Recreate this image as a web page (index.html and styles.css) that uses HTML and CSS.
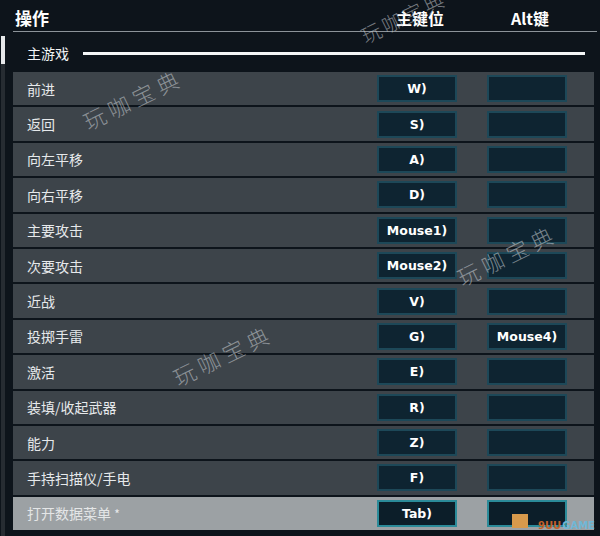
FILE: index.html
```html
<!DOCTYPE html>
<html>

<head>
	<meta charset="utf-8">
	<title>操作</title>
	<link rel="stylesheet" href="styles.css">
</head>

<body>
	<div class="screen">
		<div class="head">
			<span class="head-title">操作</span>
			<span class="head-col">主键位</span>
			<span class="head-col">Alt键</span>
		</div>
		<div class="body">
			<div class="scroll"><div class="scroll-thumb"></div></div>
			<div class="list">
				<div class="section">
					<span>主游戏</span>
					<div class="section-line"></div>
				</div>
				<div class="row"><span class="name">前进</span><span class="key">W)</span><span class="key"></span></div>
				<div class="row"><span class="name">返回</span><span class="key">S)</span><span class="key"></span></div>
				<div class="row"><span class="name">向左平移</span><span class="key">A)</span><span class="key"></span></div>
				<div class="row"><span class="name">向右平移</span><span class="key">D)</span><span class="key"></span></div>
				<div class="row"><span class="name">主要攻击</span><span class="key">Mouse1)</span><span class="key"></span></div>
				<div class="row"><span class="name">次要攻击</span><span class="key">Mouse2)</span><span class="key"></span></div>
				<div class="row"><span class="name">近战</span><span class="key">V)</span><span class="key"></span></div>
				<div class="row"><span class="name">投掷手雷</span><span class="key">G)</span><span class="key">Mouse4)</span></div>
				<div class="row"><span class="name">激活</span><span class="key">E)</span><span class="key"></span></div>
				<div class="row"><span class="name">装填/收起武器</span><span class="key">R)</span><span class="key"></span></div>
				<div class="row"><span class="name">能力</span><span class="key">Z)</span><span class="key"></span></div>
				<div class="row"><span class="name">手持扫描仪/手电</span><span class="key">F)</span><span class="key"></span></div>
				<div class="row row-active"><span class="name">打开数据菜单 <i class="star">*</i></span><span class="key">Tab)</span><span class="key"></span></div>
			</div>
		</div>

		<span class="mark mark-1">玩咖宝典</span>
		<span class="mark mark-2">玩咖宝典</span>
		<span class="mark mark-3">玩咖宝典</span>
		<span class="mark mark-4">玩咖宝典</span>
		<span class="logo"><b class="logo-box"></b>9UU<em>GAME</em></span>
	</div>
</body>

</html>
```

FILE: styles.css
```css
html,
body {
	margin: 0;
	padding: 0;
	background-color: #0d141b;
}

.screen {
	position: relative;
	width: 600px;
	height: 536px;
	overflow: hidden;
	font-family: "Noto Sans CJK SC", "Noto Sans", sans-serif;
	color: #e9ecee;
}

.head {
	display: grid;
	grid-template-columns: 1fr 80px 80px;
	column-gap: 30px;
	align-items: end;
	margin-left: 13px;
	width: 555px;
	padding: 5px 27px 2px 2px;
	border-bottom: 1px solid #8c9399;
	height: 24px;
}

.head-title {
	font-size: 17px;
	font-weight: bold;
	line-height: 22px;
	color: #ffffff;
}

.head-col {
	font-size: 16px;
	font-weight: bold;
	line-height: 22px;
	text-align: center;
	color: #ffffff;
}

.body {
	display: flex;
	padding-top: 4px;
}

.scroll {
	width: 4px;
	margin: 0 8px 0 1px;
	background-color: #262c32;
	height: 500px;
}

.scroll-thumb {
	height: 28px;
	background-color: #e6e8ea;
}

.list {
	width: 581px;
	display: flex;
	flex-direction: column;
	gap: 2px;
}

.section {
	display: flex;
	align-items: center;
	height: 34px;
	padding-left: 14px;
	font-size: 14px;
	color: #f2f4f5;
}

.section-line {
	flex: 1;
	height: 3px;
	margin: 0 9px 0 14px;
	background-color: #f4f6f7;
}

.row {
	display: grid;
	grid-template-columns: 1fr 80px 80px;
	column-gap: 30px;
	align-items: center;
	height: 33.4px;
	padding: 0 27px 0 14px;
	background-color: #3d444a;
	font-size: 14px;
}

.name {
	color: #e6e9eb;
}

.key {
	height: 23px;
	line-height: 23px;
	border: 2px solid #1d4858;
	background-color: #0e2431;
	text-align: center;
	font-family: "DejaVu Sans", sans-serif;
	font-weight: bold;
	font-size: 12.5px;
	color: #ffffff;
}

.row-active {
	background-color: #9ca1a4;
}

.row-active .name {
	color: #e4e6e7;
}

.row-active .key {
	border-color: #2b8b99;
	background-color: #0c1e29;
}

.star {
	font-style: normal;
	font-size: 12px;
	color: #e8eaeb;
}

.mark {
	position: absolute;
	font-size: 22px;
	letter-spacing: 5px;
	color: rgba(205, 210, 215, 0.55);
	font-family: "Noto Sans CJK SC", sans-serif;
	font-weight: 300;
	transform: rotate(-26deg);
	transform-origin: left center;
	white-space: nowrap;
}

.mark-1 {
	left: 362px;
	top: 22px;
	font-size: 20px;
	letter-spacing: 3px;
}

.mark-2 {
	left: 84px;
	top: 106px;
}

.mark-3 {
	left: 458px;
	top: 262px;
}

.mark-4 {
	left: 174px;
	top: 362px;
}

.logo {
	position: absolute;
	left: 538px;
	top: 520px;
	font-family: "DejaVu Sans", sans-serif;
	font-size: 10px;
	font-weight: bold;
	color: #c0602a;
	display: flex;
	align-items: center;
	gap: 1px;
}

.logo em {
	font-style: normal;
	color: #6fb7d6;
}

.logo-box {
	position: absolute;
	left: -26px;
	top: -6px;
	width: 16px;
	height: 14px;
	background-color: #d79a4c;
}
```
